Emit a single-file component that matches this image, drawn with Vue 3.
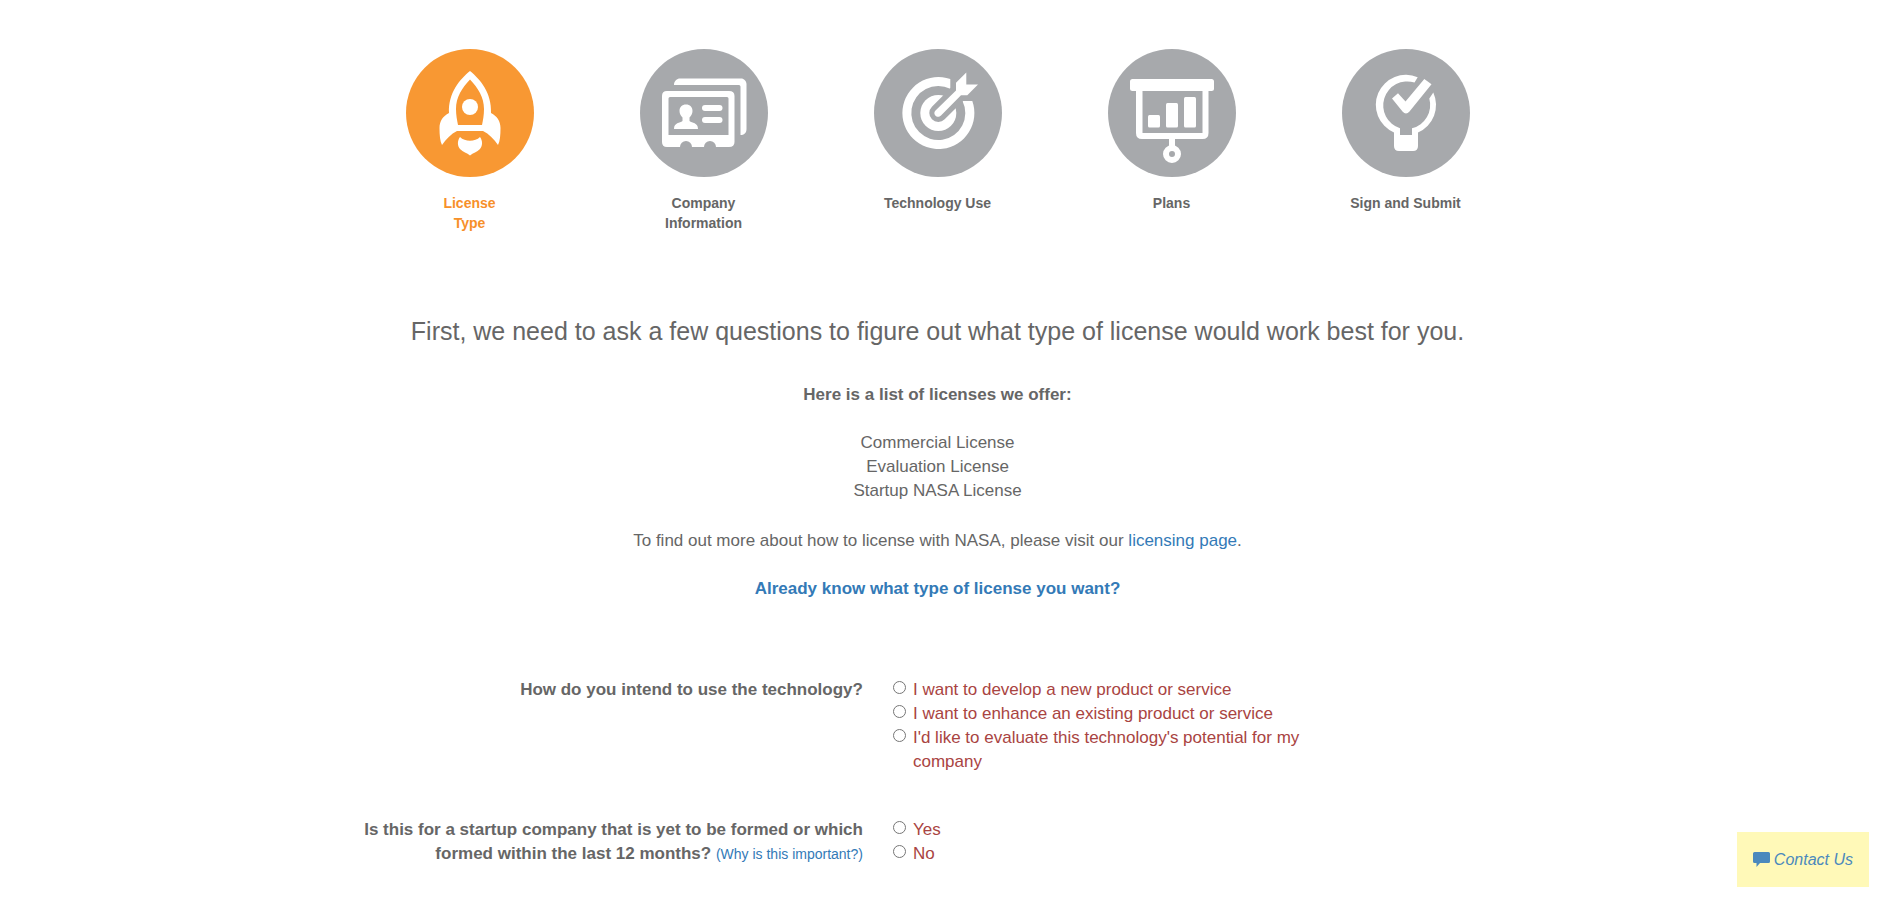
<script setup>
import { ref } from 'vue';

const steps = [
    { id: 'license', lines: ['License', 'Type'] },
    { id: 'company', lines: ['Company', 'Information'] },
    { id: 'technology', lines: ['Technology Use'] },
    { id: 'plans', lines: ['Plans'] },
    { id: 'sign', lines: ['Sign and Submit'] },
];

const current = ref('license');

const licenses = ['Commercial License', 'Evaluation License', 'Startup NASA License'];

const questions = [
    {
        name: 'intent',
        text: 'How do you intend to use the technology?',
        options: [
            'I want to develop a new product or service',
            'I want to enhance an existing product or service',
            "I'd like to evaluate this technology's potential for my company",
        ],
    },
    {
        name: 'startup',
        text: 'Is this for a startup company that is yet to be formed or which formed within the last 12 months?',
        help: '(Why is this important?)',
        options: ['Yes', 'No'],
    },
];

const answers = ref({ intent: null, startup: null });
</script>

<template>
    <main class="container">
        <ol class="steps">
            <li v-for="step in steps" :key="step.id" class="step" :class="{ active: step.id === current }">
                <svg class="step-icon" viewBox="0 0 128 128" aria-hidden="true">
                    <circle class="disc" cx="64" cy="64" r="64" />

                    <!-- rocket -->
                    <g v-if="step.id === 'license'" class="ink">
                        <path fill-rule="evenodd" d="M64 22C54 30 42 44 43 64C37 67 33.500 72 33.500 79C33.500 86 34 92 36 96C40 90 45 85 51 82H77C83 85 88 90 92 96C94 92 94.500 86 94.500 79C94.500 72 91 67 85 64C86 44 74 30 64 22ZM64 30.500C72 39 78 48 78 60C78 66 77 71 76 76H52C51 71 50 66 50 60C50 48 56 39 64 30.500Z" />
                        <circle cx="64" cy="58" r="8" />
                        <path d="M54 88C59 93 69 93 74 88C77 92 76.500 97 74 100C71 103 67 104 64 106.500C61 104 57 103 54 100C51.500 97 51 92 54 88Z" />
                    </g>

                    <!-- id cards -->
                    <g v-else-if="step.id === 'company'" class="ink">
                        <path d="M34 36C34 32 37 29.500 40 29.500H101C104 29.500 106.500 32 106.500 35V80C106.500 84 104 86 100.500 86V38C100.500 37 100 36 99 36Z" />
                        <path fill-rule="evenodd" d="M27 42H89Q94.500 42 94.500 47V93Q94.500 98 89 98H76A6 6 0 0 0 64 98H52A6 6 0 0 0 40 98H27Q22 98 22 93V47Q22 42 27 42ZM30 48Q28.500 48 28.500 49.500V86H88.500V49.500Q88.500 48 87 48Z" />
                        <path d="M46 55.500C50 55.500 52.500 58 52.500 62C52.500 65 51 67 49.500 68.500V72C52 74 58 73.500 58 80H34C34 73.500 40 74 42.500 72V68.500C41 67 39.500 65 39.500 62C39.500 58 42 55.500 46 55.500Z" />
                        <rect x="62" y="56" width="20.500" height="6" rx="3" />
                        <rect x="62" y="68" width="20.500" height="6" rx="3" />
                    </g>

                    <!-- target with arrow -->
                    <g v-else-if="step.id === 'technology'" class="ink">
                        <path d="M98.300 52A36 36 0 1 1 76.300 30.100V39.800A27 27 0 1 0 88.500 52Z" />
                        <circle cx="64.300" cy="64" r="18" />
                        <path class="channel" d="M64.300 64L86 42.300" />
                        <path d="M82 33.700L92.300 23.500V35.500H104L93.300 46.300H87L67 66.500C65 68.500 62.500 68 61.300 66.500C60 65 60 63 61.500 61.500L82 41.500Z" />
                    </g>

                    <!-- presentation chart -->
                    <g v-else-if="step.id === 'plans'" class="ink">
                        <rect x="22" y="30" width="84" height="12" rx="2.500" />
                        <path fill-rule="evenodd" d="M28 40H100.500V84Q100.500 90 94.500 90H34Q28 90 28 84ZM34.500 42V84H94.500V42Z" />
                        <rect x="40" y="66" width="12" height="12.500" rx="1.500" />
                        <rect x="58" y="54" width="12" height="24.500" rx="1.500" />
                        <rect x="76" y="48" width="12" height="30.500" rx="1.500" />
                        <rect x="61" y="88" width="6" height="10" />
                        <path fill-rule="evenodd" d="M55 105A9 9 0 1 0 73 105A9 9 0 1 0 55 105ZM61 105A3 3 0 1 1 67 105A3 3 0 1 1 61 105Z" />
                    </g>

                    <!-- bulb with check mark -->
                    <g v-else class="ink">
                        <path d="M75.700 28.300A30 30 0 1 0 52 83.500V97Q52 102 57 102H71Q76 102 76 97V83.500A30 30 0 0 0 91.300 43.500L87.300 49.500A24 24 0 0 1 70 79.300V86H58V79.300A24 24 0 1 1 72.500 33.500Z" />
                        <path d="M50 49.500L56 44.300L63.500 52.500L82.300 30L89.500 35.300L67.500 62.500Q64 66.500 60.500 62.500Z" />
                    </g>
                </svg>
                <span class="step-label">
                    <span v-for="line in step.lines" :key="line">{{ line }}</span>
                </span>
            </li>
        </ol>

        <section class="intro">
            <h1>First, we need to ask a few questions to figure out what type of license would work best for you.</h1>
            <p><strong>Here is a list of licenses we offer:</strong></p>
            <ul>
                <li v-for="license in licenses" :key="license">{{ license }}</li>
            </ul>
            <p>To find out more about how to license with NASA, please visit our <a href="#licensing">licensing page</a>.</p>
            <p><a href="#types"><strong>Already know what type of license you want?</strong></a></p>
        </section>

        <form class="questions" @submit.prevent>
            <div v-for="q in questions" :key="q.name" class="question" role="radiogroup" :aria-labelledby="q.name + '-text'">
                <div class="question-text">
                    <strong :id="q.name + '-text'">{{ q.text }}</strong>
                    <template v-if="q.help">&nbsp;<a href="#why" class="help">{{ q.help }}</a></template>
                </div>
                <div class="options">
                    <label v-for="(option, i) in q.options" :key="option" :for="q.name + i">
                        <input :id="q.name + i" v-model="answers[q.name]" type="radio" :name="q.name" :value="option">
                        <span>{{ option }}</span>
                    </label>
                </div>
            </div>
        </form>
    </main>

    <a href="#contact" class="contact">
        <svg viewBox="0 0 17 15" aria-hidden="true">
            <path d="M1.500 0H15.500Q17 0 17 1.500V9.500Q17 11 15.500 11H7L3.500 15V11H1.500Q0 11 0 9.500V1.500Q0 0 1.500 0Z" />
        </svg>
        <span>Contact Us</span>
    </a>
</template>

<style>
body {
    margin: 0;
    background: #fff;
}
</style>

<style scoped>
.container {
    max-width: 1170px;
    margin: 0 auto;
    padding: 49px 2px 0 0;
    color: #666;
    font-family: Arial, "Liberation Sans", sans-serif;
    font-size: 17px;
    line-height: 24px;
}

a {
    color: #337ab7;
    text-decoration: none;
}

a:hover {
    text-decoration: underline;
}

/* Progress steps */
.steps {
    display: grid;
    grid-template-columns: repeat(5, 1fr);
    margin: 0;
    padding: 0;
    list-style: none;
}

.step {
    display: flex;
    flex-direction: column;
    align-items: center;
    gap: 16px;
}

.step-icon {
    width: 128px;
    height: 128px;
}

.disc {
    fill: #a7a9ac;
}

.ink {
    fill: #fff;
}

.channel {
    stroke: #a7a9ac;
    stroke-width: 18px;
    stroke-linecap: round;
}

.step-label {
    display: flex;
    flex-direction: column;
    font-size: 14px;
    font-weight: bold;
    line-height: 20px;
    text-align: center;
}

.active .disc {
    fill: #f89833;
}

.active .step-label {
    color: #f7902a;
}

/* Intro copy */
.intro {
    margin-top: 80px;
    text-align: center;
}

.intro h1 {
    margin: 0 0 34px;
    font-size: 25px;
    font-weight: normal;
    line-height: 36px;
}

.intro p {
    margin: 0 0 24px;
}

.intro ul {
    margin: 0 0 26px;
    padding: 0;
    list-style: none;
}

/* Questions */
.questions {
    margin-top: 77px;
    padding-right: 192px;
}

.question {
    display: grid;
    grid-template-columns: 7fr 6fr;
    column-gap: 30px;
    margin-bottom: 44px;
}

.question-text {
    text-align: right;
}

.help {
    font-size: 14px;
}

.options {
    color: #a94442;
}

.options label {
    display: flex;
    align-items: flex-start;
    gap: 7px;
}

.options input {
    flex: none;
    width: 13px;
    height: 13px;
    margin: 3px 0 0;
}

.contact {
    position: fixed;
    right: 8px;
    bottom: 13px;
    display: flex;
    align-items: center;
    gap: 4px;
    padding: 16px;
    background: #fff9b8;
    color: #4b89bd;
    font-family: Arial, "Liberation Sans", sans-serif;
    font-size: 16px;
    font-style: italic;
    line-height: 23px;
}

.contact svg {
    width: 17px;
    height: 15px;
    fill: #4b89bd;
}
</style>
